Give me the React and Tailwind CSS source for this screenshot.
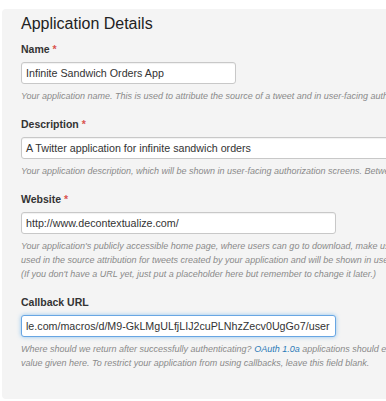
const Field = ({ label, required, children, help }) => {
  return (
    <div className="mb-[14px]">
      <div className="text-[10.5px] font-bold text-[#333] leading-[14px] mb-[6px]">
        {label}
        {required && <span className="text-[#d9534f] ml-[3px]">*</span>}
      </div>
      {children}
      <div className="mt-[5px] text-[9px] italic text-[#8a8a8a] leading-[14px] whitespace-nowrap">
        {help}
      </div>
    </div>
  );
};

const inputClass =
  "h-[22px] rounded-[3px] border border-[#c8c8c8] bg-white px-[4px] text-[10.7px] text-[#333] leading-[20px] whitespace-nowrap overflow-hidden shadow-[inset_0_1px_1px_rgba(0,0,0,0.06)]";

export default function App() {
  return (
    <div className="w-[386px] h-[401px] overflow-hidden bg-white font-['Liberation_Sans',Arial,sans-serif]">
      <div className="ml-[2px] mt-[9px] w-[420px] h-[390px] rounded-[4px] bg-[#f4f4f4] pl-[19px] pt-[5px]">
        <h1 className="text-[16px] text-[#222] leading-[20px] mb-[8px]">Application Details</h1>

        <Field
          label="Name"
          required
          help="Your application name. This is used to attribute the source of a tweet and in user-facing authorization screens. 32 characters max."
        >
          <div className={inputClass + " w-[215px]"}>Infinite Sandwich Orders App</div>
        </Field>

        <Field
          label="Description"
          required
          help="Your application description, which will be shown in user-facing authorization screens. Between 10 and 200 characters max."
        >
          <div className={inputClass + " w-[400px]"}>A Twitter application for infinite sandwich orders</div>
        </Field>

        <Field
          label="Website"
          required
          help={
            <>
              <div>Your application's publicly accessible home page, where users can go to download, make use of, or find out more information about your application. This fully-qualified URL is</div>
              <div>used in the source attribution for tweets created by your application and will be shown in user-facing authorization screens.</div>
              <div>(If you don't have a URL yet, just put a placeholder here but remember to change it later.)</div>
            </>
          }
        >
          <div className={inputClass + " w-[315px]"}>http://www.decontextualize.com/</div>
        </Field>

        <Field
          label="Callback URL"
          help={
            <>
              <div>
                Where should we return after successfully authenticating?{" "}
                <span className="text-[#2a7ab8]">OAuth 1.0a</span> applications should explicitly specify their oauth_callback URL on the request token step, regardless of the
              </div>
              <div>value given here. To restrict your application from using callbacks, leave this field blank.</div>
            </>
          }
        >
          <div className="h-[22px] w-[315px] rounded-[3px] border border-[#68a6e3] bg-white px-[4px] text-[10.7px] text-[#333] leading-[20px] whitespace-nowrap overflow-hidden shadow-[0_0_4px_rgba(82,168,236,0.6)]">
            le.com/macros/d/M9-GkLMgULfjLIJ2cuPLNhzZecv0UgGo7/user
          </div>
        </Field>
      </div>
    </div>
  );
}
